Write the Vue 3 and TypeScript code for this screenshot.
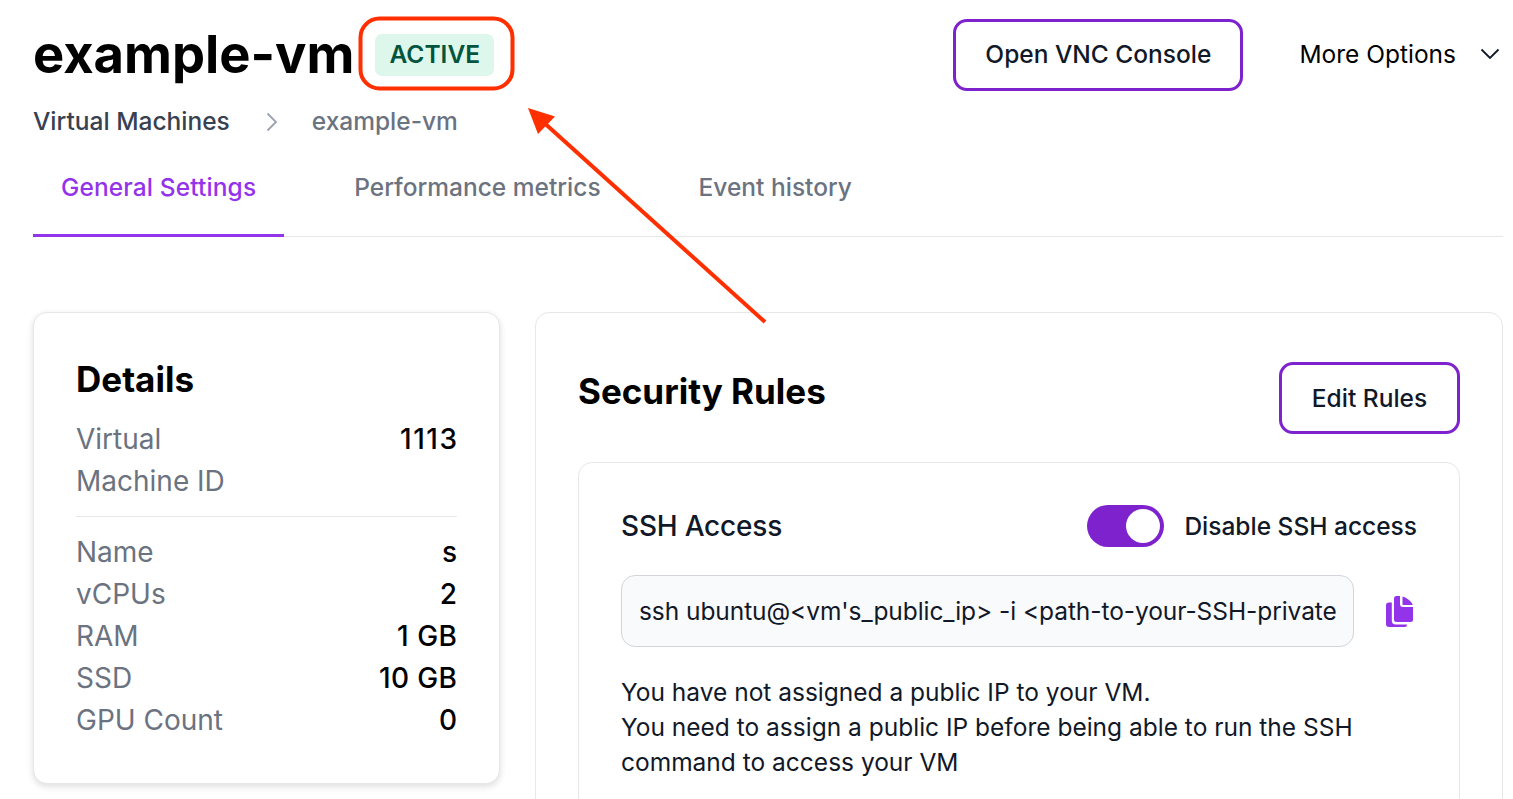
<script setup lang="ts">
const details = [
  { label: 'Name', value: 's' },
  { label: 'vCPUs', value: '2' },
  { label: 'RAM', value: '1 GB' },
  { label: 'SSD', value: '10 GB' },
  { label: 'GPU Count', value: '0' },
];
const tabs = ['General Settings', 'Performance metrics', 'Event history'];
const sshCommand = "ssh ubuntu@<vm's_public_ip> -i <path-to-your-SSH-private-key>";

// the installed Inter has a narrower "1" than the one in the design
const oneSpacing = (value: string) => {
  const extra = (value.split('1').length - 1) * 2;
  const spacing = extra / value.length;
  return { letterSpacing: `${spacing}px`, marginRight: `${-spacing}px` };
};
</script>

<template>
  <div class="page">
    <header class="top">
      <div class="title-wrap">
        <h1>example-vm</h1>
        <span class="badge">ACTIVE</span>
      </div>
      <div class="actions">
        <button class="btn vnc">Open VNC Console</button>
        <div class="more">
          <span>More Options</span>
          <svg width="20" height="12" viewBox="0 0 20 12" fill="none" stroke="#111827" stroke-width="1.8">
            <path d="M1.5 1.5L10 10L18.5 1.5" />
          </svg>
        </div>
      </div>
    </header>

    <nav class="crumbs">
      <span class="first">Virtual Machines</span>
      <svg class="crumb-sep" width="12" height="20" viewBox="0 0 12 20" fill="none" stroke="#9ca3af" stroke-width="1.8">
        <path d="M1.5 1.5L10 10L1.5 18.5" />
      </svg>
      <span>example-vm</span>
    </nav>

    <div class="tabs">
      <div v-for="(t, i) in tabs" :key="t" class="tab" :class="{ active: i === 0 }">{{ t }}</div>
    </div>

    <main class="grid">
      <section class="card details">
        <h2>Details</h2>
        <div class="row first-row">
          <span class="label narrow">Virtual Machine ID</span>
          <span class="value" :style="oneSpacing('1113')">1113</span>
        </div>
        <div class="rows">
          <div v-for="d in details" :key="d.label" class="row">
            <span class="label">{{ d.label }}</span>
            <span class="value" :style="oneSpacing(d.value)">{{ d.value }}</span>
          </div>
        </div>
      </section>

      <section class="card rules">
        <div class="rules-head">
          <h2>Security Rules</h2>
          <button class="btn edit">Edit Rules</button>
        </div>
        <div class="inner">
          <div class="ssh-head">
            <h3>SSH Access</h3>
            <div class="toggle-wrap">
              <span class="toggle"><span class="knob"></span></span>
              <span class="toggle-label">Disable SSH access</span>
            </div>
          </div>
          <div class="command">
            <input class="command-input" readonly :value="sshCommand" />
            <svg class="copy" width="27" height="31" viewBox="0 0 27 31" fill="#9333ea">
              <path d="M8 2.500A2.500 2.500 0 0 1 10.500 0H14v8a3 3 0 0 0 3 3h10v12.500a2.500 2.500 0 0 1-2.500 2.500H10.500A2.500 2.500 0 0 1 8 23.500Z" />
              <path d="M16.500 0.500C20.500 1.500 25.500 5.500 26.800 9H17.500a1 1 0 0 1-1-1Z" />
              <path d="M5.800 6.500V24.500A4 4 0 0 0 9.800 28.500H21V28.800A2.200 2.200 0 0 1 18.800 31H3A3 3 0 0 1 0 28V9.500A3 3 0 0 1 3 6.500Z" />
            </svg>
          </div>
          <p class="note">
            You have not assigned a public IP to your VM.<br />
            You need to assign a public IP before being able to run the SSH command to access your VM
          </p>
        </div>
      </section>
    </main>

    <svg class="annotation" width="1513" height="799" viewBox="0 0 1513 799" fill="none">
      <rect x="360.500" y="18.500" width="152" height="70" rx="19" stroke="#ff2f00" stroke-width="4" />
      <path d="M765 322L541 120" stroke="#ff2f00" stroke-width="4" />
      <path d="M528 108L555 116.500L538 134Z" fill="#ff2f00" />
    </svg>
  </div>
</template>

<style scoped>
.page {
  position: relative;
  height: 799px;
  overflow: hidden;
  box-sizing: border-box;
  padding: 19px 10px 0 33px;
  font-family: Inter, "Liberation Sans", sans-serif;
  font-size: 24.5px;
  line-height: 35px;
  color: #111827;
  background: #fff;
}

.top {
  display: flex;
  justify-content: space-between;
  align-items: center;
  height: 72px;
}

.title-wrap {
  display: flex;
  align-items: center;
  gap: 20px;
}

h1 {
  margin: 0;
  padding-bottom: 2px;
  font-size: 52.500px;
  line-height: 70px;
  font-weight: 700;
  color: #000;
}

.badge {
  padding: 0 14px 0 15px;
  height: 42px;
  line-height: 40px;
  border-radius: 7px;
  background: #def7ec;
  color: #03543f;
  font-weight: 600;
}

.actions {
  display: flex;
  align-items: center;
  gap: 56px;
}

.btn {
  font: inherit;
  font-weight: 500;
  color: #111827;
  background: #fff;
  border: 3px solid #7e22ce;
  border-radius: 14px;
  height: 72px;
  box-sizing: border-box;
}

.vnc {
  width: 290px;
  padding-bottom: 2px;
}

.more {
  display: flex;
  align-items: center;
  gap: 24px;
  padding-right: 3px;
  padding-bottom: 2px;
  color: #000;
}

.crumbs {
  display: flex;
  align-items: center;
  gap: 35px;
  margin-top: 13px;
  color: #6b7280;
  font-weight: 500;
}

.crumbs .first {
  color: #374151;
}

.crumb-sep {
  margin: 0 -1px 0 1px;
}

.tabs {
  display: flex;
  gap: 42px;
  margin-top: 14px;
  border-bottom: 1px solid #e5e7eb;
  height: 84px;
  box-sizing: border-box;
}

.tab {
  padding: 17px 28px 0;
  height: 84px;
  box-sizing: border-box;
  font-weight: 500;
  color: #6b7280;
}

.tab.active {
  color: #9333ea;
  letter-spacing: 0.12px;
  border-bottom: 3px solid #9333ea;
}

.grid {
  display: grid;
  grid-template-columns: 467px 968px;
  gap: 35px;
  align-items: start;
  margin-top: 75px;
}

.card {
  box-sizing: border-box;
  background: #fff;
  border: 1px solid #e5e7eb;
  border-radius: 14px;
  padding: 42px;
}

.details {
  padding-top: 45px;
  padding-bottom: 42px;
  box-shadow: 0 2px 6px rgba(0, 0, 0, 0.1), 0 4px 10px rgba(0, 0, 0, 0.04);
}

h2 {
  margin: 0;
  font-size: 35px;
  line-height: 42px;
  font-weight: 700;
  color: #000;
}

.row {
  display: flex;
  justify-content: space-between;
  align-items: flex-start;
  font-size: 28px;
  line-height: 42px;
}

.first-row {
  margin-top: 18px;
  padding-bottom: 14px;
  border-bottom: 1px solid #e5e7eb;
}

.rows {
  margin-top: 14px;
}

.label {
  color: #6b7280;
}

.narrow {
  width: 190px;
}

.value {
  color: #000;
  font-weight: 500;
}

.rules {
  height: 700px;
}

.rules-head {
  display: flex;
  justify-content: space-between;
  align-items: flex-start;
  margin-top: 7px;
}

.rules-head h2 {
  margin-top: 8px;
}

.edit {
  width: 181px;
}

.inner {
  margin-top: 28px;
  border: 1px solid #e5e7eb;
  border-radius: 14px;
  padding: 42px;
}

.ssh-head {
  display: flex;
  justify-content: space-between;
  align-items: center;
  height: 42px;
}

h3 {
  margin: 0;
  font-size: 28px;
  line-height: 42px;
  font-weight: 500;
  letter-spacing: -0.2px;
  color: #111827;
}

.toggle-wrap {
  display: flex;
  align-items: center;
  gap: 20px;
}

.toggle {
  position: relative;
  display: block;
  width: 77px;
  height: 42px;
  border-radius: 21px;
  background: #7e22ce;
}

.knob {
  position: absolute;
  top: 4px;
  right: 4px;
  width: 34px;
  height: 34px;
  border-radius: 50%;
  background: #fff;
}

.toggle-label {
  font-weight: 500;
}

.command {
  display: flex;
  align-items: center;
  margin-top: 28px;
  gap: 32px;
}

.command-input {
  width: 733px;
  height: 72px;
  box-sizing: border-box;
  padding: 0 16px 0 17px;
  font: inherit;
  letter-spacing: -0.07px;
  color: #111827;
  background: #f9fafb;
  border: 1px solid #d1d5db;
  border-radius: 14px;
  outline: none;
}

.note {
  margin: 28px 0 0;
}

.annotation {
  position: absolute;
  top: 0;
  left: 0;
  pointer-events: none;
}
</style>

<style>
html,
body {
  margin: 0;
  overflow: hidden;
}
</style>
